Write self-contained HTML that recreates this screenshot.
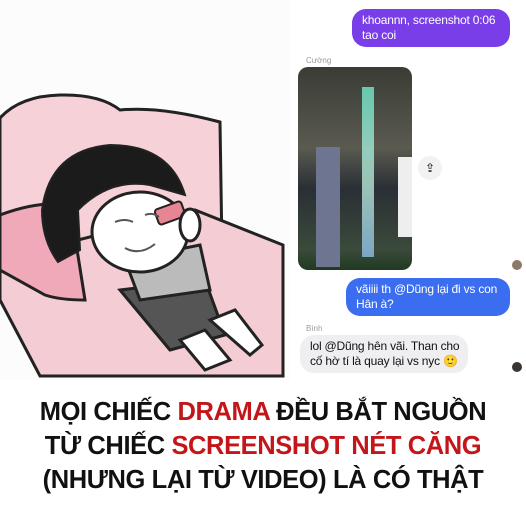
<!DOCTYPE html>
<html><head><meta charset="utf-8"><style>
html,body{margin:0;padding:0;width:526px;height:526px;overflow:hidden;background:#fff;font-family:"Liberation Sans",sans-serif}
.b{position:absolute;border-radius:14px;font-size:12px;line-height:15px;padding:4px 10px;white-space:nowrap;letter-spacing:-0.2px}
.n{position:absolute;font-size:8px;color:#9a9a9a}
.t{position:absolute;left:0;width:526px;text-align:center;font-weight:bold;font-size:25.5px;color:#111;letter-spacing:-0.4px;white-space:nowrap}
.r{color:#c3151a}
</style></head><body>
<svg width="290" height="380" style="position:absolute;left:0;top:0" viewBox="0 0 290 380">
<rect width="290" height="380" fill="#fdfcfd"/>
<path d="M0 118 Q20 96 60 95 Q100 94 120 110 Q160 106 220 122 L222 250 L0 270 Z" fill="#f6d2d8" stroke="#222" stroke-width="3"/>
<path d="M0 260 L195 210 L283 245 L283 376 L40 376 L0 300 Z" fill="#f4ccd4" stroke="#222" stroke-width="3"/>
<path d="M0 215 Q40 200 70 205 L85 300 Q60 300 45 295 L0 270 Z" fill="#f0a9b8" stroke="#222" stroke-width="3"/>
<path d="M120 290 L205 280 L225 335 L170 350 Z" fill="#555" stroke="#222" stroke-width="3"/>
<path d="M180 340 L205 370 L230 360 L205 330 Z M210 320 L250 355 L262 345 L235 310 Z" fill="#fff" stroke="#222" stroke-width="3"/>
<path d="M125 260 L200 245 L210 290 L140 300 Z" fill="#bbb" stroke="#222" stroke-width="3"/>
<ellipse cx="140" cy="232" rx="48" ry="40" fill="#fff" stroke="#222" stroke-width="3"/>
<path d="M42 210 Q50 150 110 145 Q170 145 185 195 L150 185 Q110 178 78 210 L80 250 L58 262 Q42 240 42 210 Z" fill="#1b1b1b" stroke="#222" stroke-width="2"/>
<rect x="156" y="205" width="28" height="16" rx="3" fill="#e88594" stroke="#222" stroke-width="2" transform="rotate(-20 170 213)"/>
<ellipse cx="190" cy="225" rx="10" ry="16" fill="#fff" stroke="#222" stroke-width="3"/>
<path d="M115 222 q10 -4 18 0 M145 215 q8 -3 14 2 M125 248 q15 8 30 -4" stroke="#555" stroke-width="2" fill="none"/>
</svg>
<div class="b" style="left:352px;top:9px;width:138px;background:#7a3ee8;color:#fff">khoannn, screenshot 0:06<br>tao coi</div>
<div class="n" style="left:306px;top:56px">Cường</div>
<div style="position:absolute;left:298px;top:67px;width:114px;height:203px;border-radius:10px;background:linear-gradient(180deg,#3a3d35 0%,#5a5a50 40%,#2a2f35 60%,#3b4a3a 90%,#1f3a22 100%);overflow:hidden">
<div style="position:absolute;left:64px;top:20px;width:12px;height:170px;background:linear-gradient(#7fd,#cfe 60%,#9cf);opacity:.7"></div>
<div style="position:absolute;left:18px;top:80px;width:24px;height:120px;background:#6e7590"></div>
<div style="position:absolute;left:100px;top:90px;width:14px;height:80px;background:#eee"></div>
</div>
<div style="position:absolute;left:418px;top:156px;width:24px;height:24px;border-radius:50%;background:#f2f2f2;font-size:12px;text-align:center;line-height:24px">⇪</div>
<div style="position:absolute;left:512px;top:260px;width:10px;height:10px;border-radius:50%;background:#8a7a66"></div>
<div class="b" style="left:346px;top:278px;width:144px;background:#3a6df0;color:#fff">vãiiii th @Dũng lại đi vs con<br>Hân à?</div>
<div class="n" style="left:306px;top:324px">Bình</div>
<div class="b" style="left:300px;top:335px;width:148px;background:#efeff1;color:#111">lol @Dũng hên vãi. Than cho<br>cố hờ tí là quay lại vs nyc 🙂</div>
<div style="position:absolute;left:512px;top:362px;width:10px;height:10px;border-radius:50%;background:#3a3530"></div>
<div class="t" style="top:398px">MỌI CHIẾC <span class="r">DRAMA</span> ĐỀU BẮT NGUỒN</div>
<div class="t" style="top:432px">TỪ CHIẾC <span class="r">SCREENSHOT NÉT CĂNG</span></div>
<div class="t" style="top:466px">(NHƯNG LẠI TỪ VIDEO) LÀ CÓ THẬT</div>
</body></html>
